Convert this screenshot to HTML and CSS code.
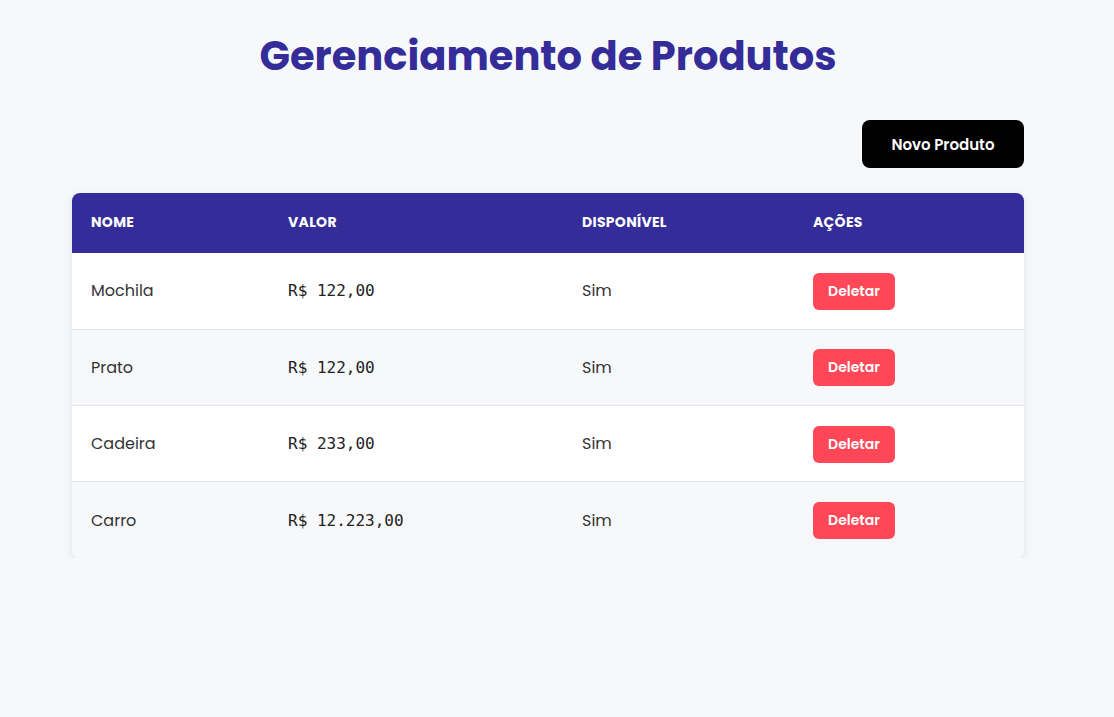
FILE: index.html
```html
<!DOCTYPE html>
<html lang="pt-BR">
<head>
<meta charset="utf-8">
<title>Gerenciamento de Produtos</title>
<link rel="stylesheet" href="styles.css">
</head>
<body>
<div class="app">
  <main class="container">
    <h1 class="title">Gerenciamento de Produtos</h1>
    <div class="toolbar">
      <button class="btn-new">Novo Produto</button>
    </div>
    <div class="table-card">
      <table class="products">
        <thead>
          <tr>
            <th class="col-name">Nome</th>
            <th class="col-value">Valor</th>
            <th class="col-avail">Disponível</th>
            <th class="col-actions">Ações</th>
          </tr>
        </thead>
        <tbody>
          <tr>
            <td>Mochila</td>
            <td class="money">R$ 122,00</td>
            <td>Sim</td>
            <td><button class="btn-delete">Deletar</button></td>
          </tr>
          <tr>
            <td>Prato</td>
            <td class="money">R$ 122,00</td>
            <td>Sim</td>
            <td><button class="btn-delete">Deletar</button></td>
          </tr>
          <tr>
            <td>Cadeira</td>
            <td class="money">R$ 233,00</td>
            <td>Sim</td>
            <td><button class="btn-delete">Deletar</button></td>
          </tr>
          <tr>
            <td>Carro</td>
            <td class="money">R$ 12.223,00</td>
            <td>Sim</td>
            <td><button class="btn-delete">Deletar</button></td>
          </tr>
        </tbody>
      </table>
    </div>
  </main>
</div>
</body>
</html>
```

FILE: styles.css
```css
* { box-sizing: border-box; }

html, body {
  margin: 0;
  padding: 0;
  background: #f7f8fa;
  font-family: "Poppins", "Inter", "Noto Sans", sans-serif;
  color: #333;
}

.app {
  width: 1096px;
}

.container {
  width: 952px;
  margin: 0 auto;
  padding-top: 29px;
}

.title {
  margin: 0;
  text-align: center;
  font-size: 40px;
  font-weight: 700;
  line-height: 54px;
  color: #332c99;
}

.toolbar {
  display: flex;
  justify-content: flex-end;
  margin-top: 37px;
}

.btn-new {
  width: 162px;
  height: 48px;
  border: none;
  border-radius: 8px;
  background: #000;
  color: #fff;
  font-family: inherit;
  font-size: 15px;
  font-weight: 600;
  cursor: pointer;
}

.table-card {
  margin-top: 25px;
  background: #fff;
  border-radius: 8px;
  overflow: hidden;
  box-shadow: 0 2px 8px rgba(0, 0, 0, 0.1);
}

.products {
  width: 100%;
  border-collapse: collapse;
  table-layout: fixed;
}

.col-name { width: 197px; }
.col-value { width: 294px; }
.col-avail { width: 231px; }
.col-actions { width: 230px; }

.products th {
  background: #332c99;
  color: #fff;
  text-align: left;
  text-transform: uppercase;
  font-size: 14px;
  font-weight: 700;
  letter-spacing: 0.3px;
  height: 60px;
  padding: 0 19px 2px;
}

.products td {
  height: 76.25px;
  padding: 0 19px;
  font-size: 16px;
  color: #333;
  border-bottom: 1px solid #e2e4e8;
}

.products tbody tr:nth-child(even) td {
  background: #f7f8fa;
}

.products tbody tr:last-child td {
  border-bottom: none;
}

.money {
  font-family: "DejaVu Sans Mono", "Liberation Mono", monospace;
}

.products td.money {
  color: #222;
}

.btn-delete {
  display: block;
  width: 82px;
  height: 37px;
  margin-top: 1px;
  border: none;
  border-radius: 6px;
  background: #ff4757;
  color: #fff;
  font-family: inherit;
  font-size: 14px;
  font-weight: 600;
  cursor: pointer;
}
```
